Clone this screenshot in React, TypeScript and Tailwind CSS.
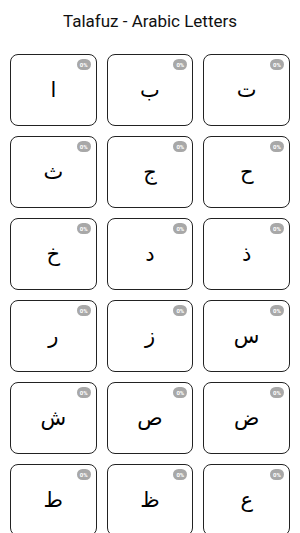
const letters = [
  "ا", "ب", "ت", "ث", "ج", "ح", "خ", "د", "ذ", "ر", "ز", "س", "ش", "ص",
  "ض", "ط", "ظ", "ع", "غ", "ف", "ق", "ك", "ل", "م", "ن", "ه", "و", "ي",
];

function LetterCard({ letter }: { letter: string }) {
  return (
    <div className="relative flex h-[72px] items-center justify-center rounded-[8px] border border-[#222] bg-white">
      <span className="absolute right-[5px] top-[4px] flex h-[11px] w-[14px] items-center justify-center rounded-full bg-[#a8a8a8] text-[6px] font-bold leading-none text-white">
        0%
      </span>
      <span className="font-['DejaVu_Sans',sans-serif] text-[21px] leading-none text-black">
        {letter}
      </span>
    </div>
  );
}

export default function App() {
  return (
    <div className="min-h-screen bg-white font-['Roboto',sans-serif]">
      <header className="flex h-[44px] items-center justify-center">
        <h1 className="text-[17px] text-[#111]">Talafuz - Arabic Letters</h1>
      </header>
      <div className="grid grid-cols-3 gap-x-[10px] gap-y-[10px] px-[10px] pt-[10px] pb-[10px]">
        {letters.map((l) => (
          <LetterCard key={l} letter={l} />
        ))}
      </div>
    </div>
  );
}
